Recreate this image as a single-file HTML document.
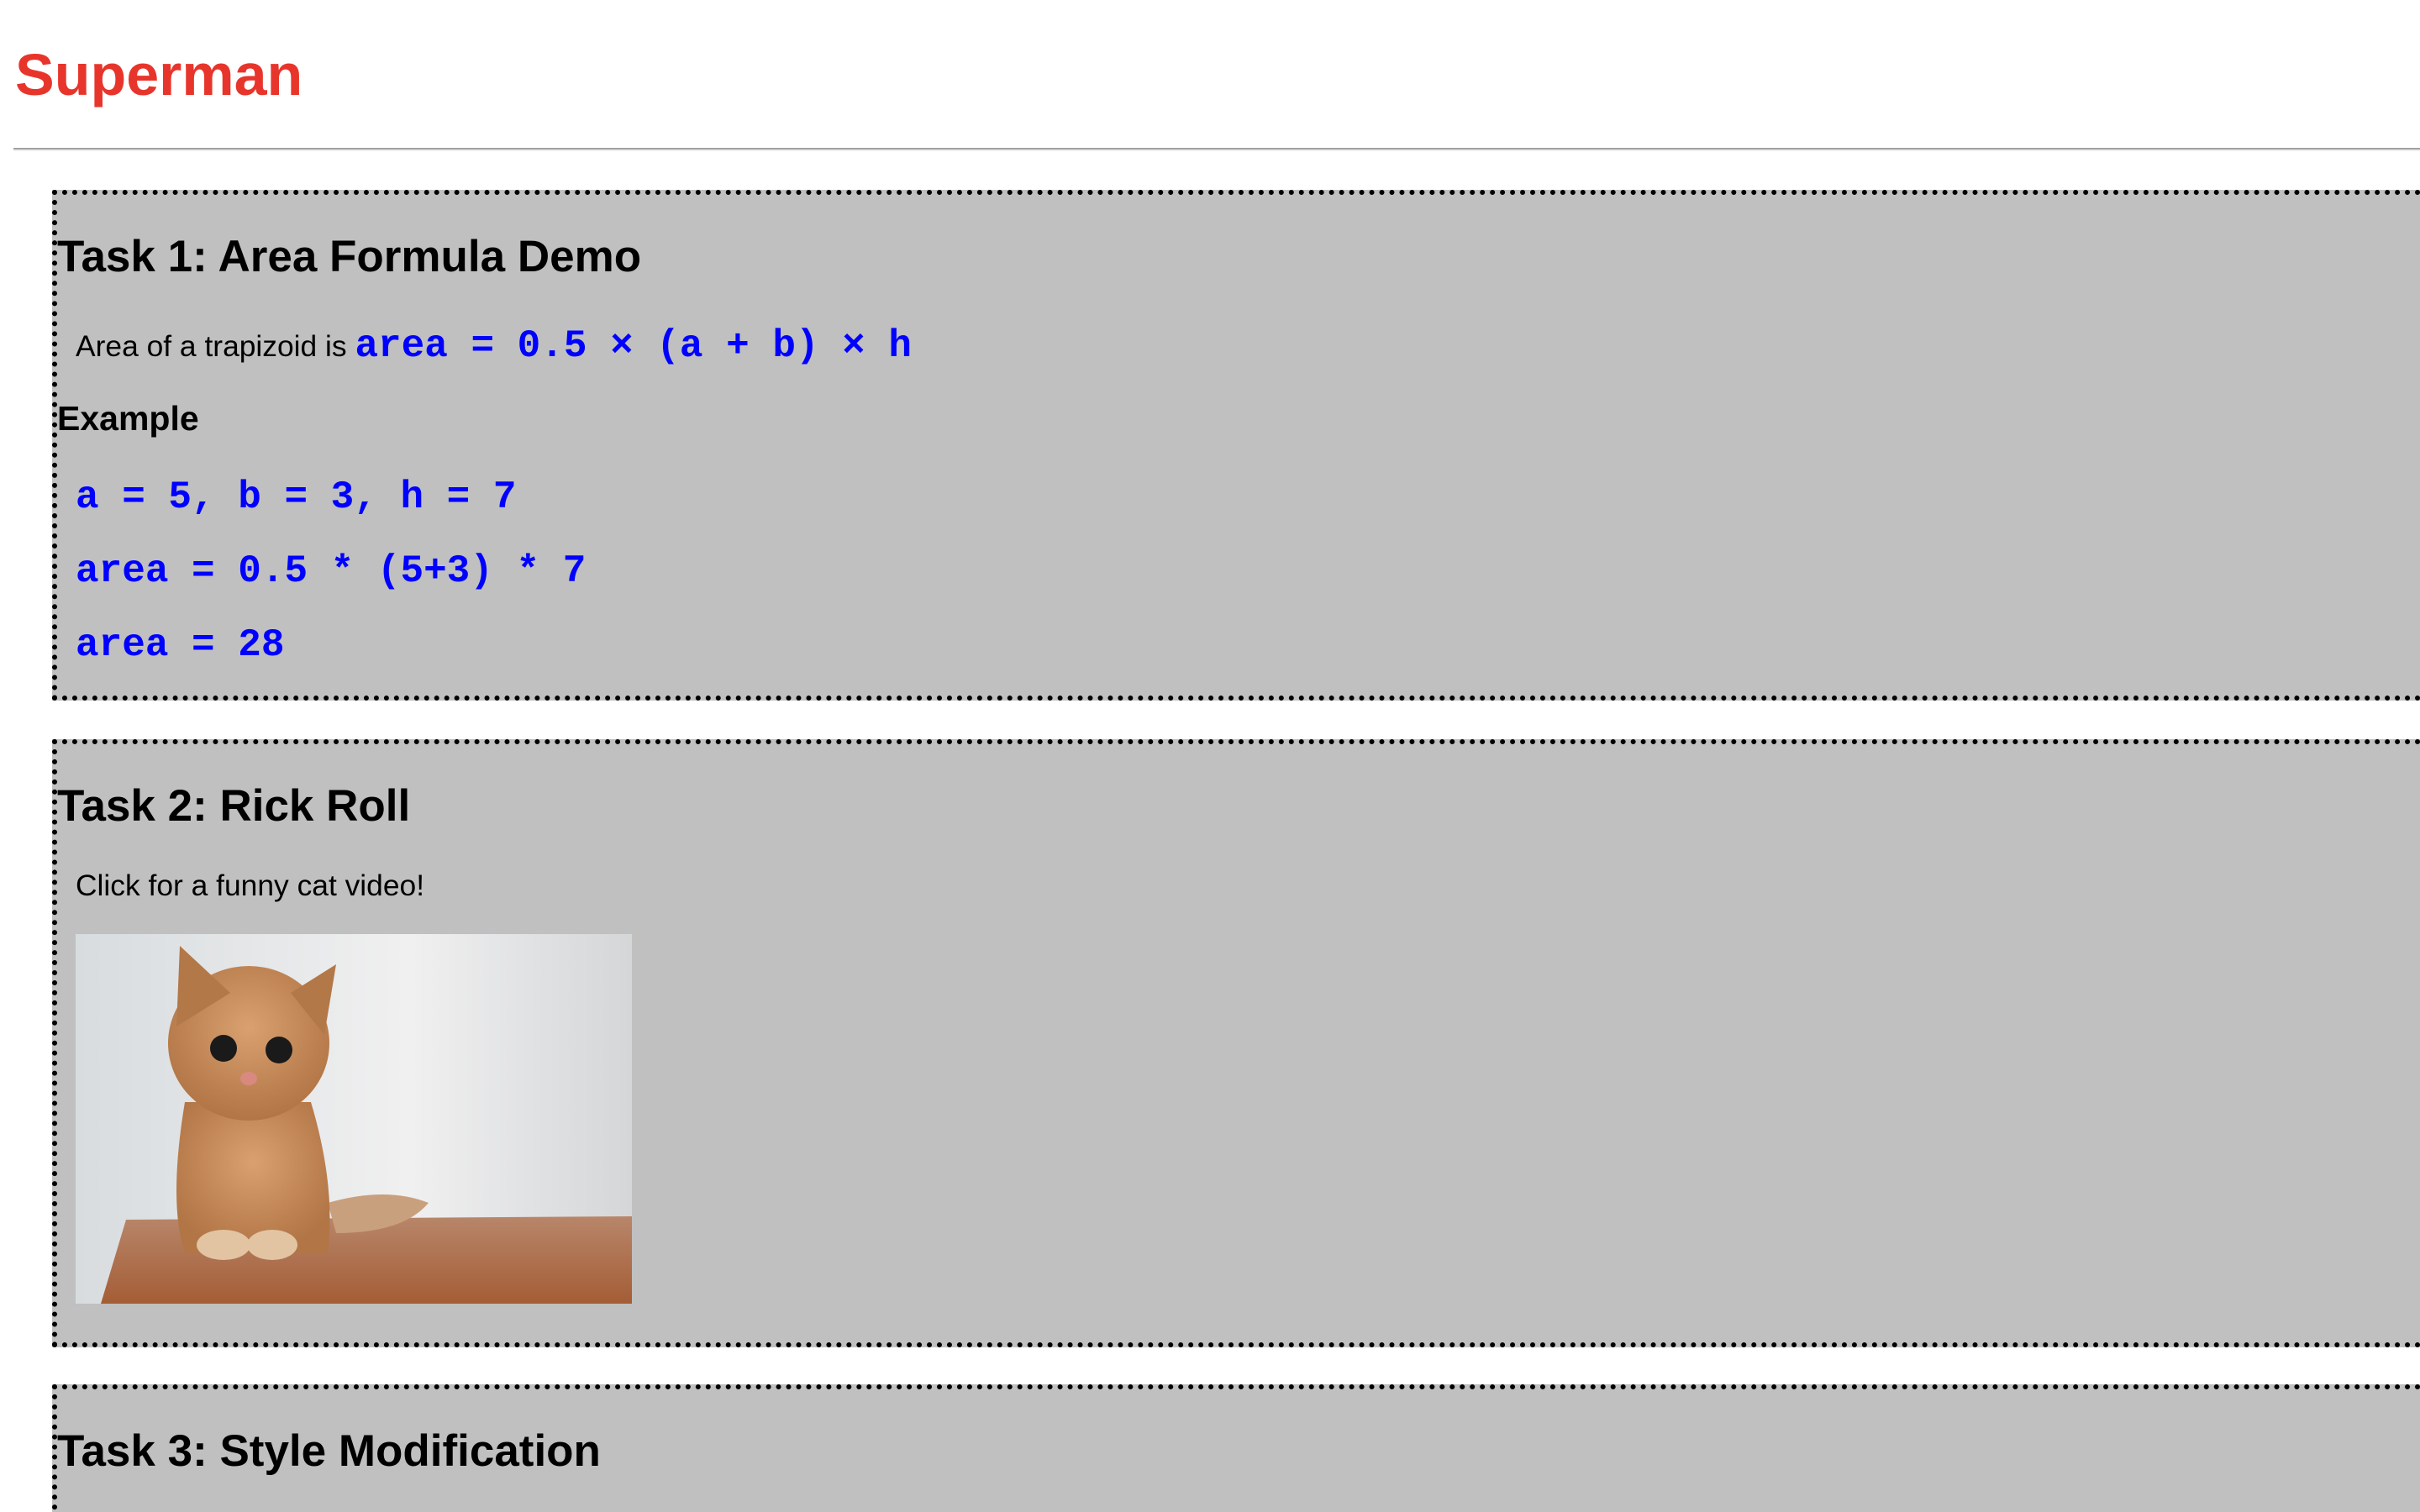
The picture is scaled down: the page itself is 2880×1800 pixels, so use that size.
<!DOCTYPE html>
<html><head><meta charset="utf-8"><style>
html,body{margin:0;padding:0;background:#fff;overflow:hidden;height:1800px}
#root{zoom:2;width:1440px;height:900px;position:relative;overflow:hidden;font-family:"Liberation Sans",Arial,sans-serif}
.a{position:absolute;white-space:nowrap}
h1.a{margin:0;color:#e8352b;font-size:35px;font-weight:bold;left:9px;top:26px;line-height:37px}
hr.a{margin:0;left:8px;width:1440px;top:88px;height:0;border:0;border-top:1px solid #a0a0a0;border-bottom:1px solid #eee}
.box{position:absolute;left:31px;width:1500px;background:#c0c0c0;border:3px dotted #000;box-sizing:border-box}
.h2{font-size:26.5px;font-weight:bold;left:34px;line-height:30px}
.p{font-size:17.7px;left:45px;line-height:22px;color:#000}
.c{font-family:"Liberation Mono","Courier New",monospace;font-weight:bold;color:#0000ff;font-size:23px}
</style></head><body><div id="root">
<h1 class="a">Superman</h1>
<hr class="a">
<div class="box" style="top:113px;height:304px"></div>
<div class="box" style="top:440px;height:362px"></div>
<div class="box" style="top:824px;height:200px"></div>

<div class="a h2" style="top:138px">Task 1: Area Formula Demo</div>
<div class="a p" style="top:193px;line-height:26px">Area of a trapizoid is <span class="c">area = 0.5 × (a + b) × h</span></div>
<div class="a" style="left:34px;top:237px;font-size:20.5px;font-weight:bold;line-height:24px">Example</div>
<div class="a c" style="left:45px;top:283px;line-height:26px">a = 5, b = 3, h = 7</div>
<div class="a c" style="left:45px;top:327px;line-height:26px">area = 0.5 * (5+3) * 7</div>
<div class="a c" style="left:45px;top:371px;line-height:26px">area = 28</div>

<div class="a h2" style="top:465px">Task 2: Rick Roll</div>
<div class="a p" style="top:516px">Click for a funny cat video!</div>
<svg class="a" style="left:45px;top:556px" width="331" height="220" viewBox="0 0 331 220" preserveAspectRatio="none">
<defs>
<linearGradient id="bg" x1="0" x2="1"><stop offset="0" stop-color="#d8dcdf"/><stop offset=".6" stop-color="#f0f0f0"/><stop offset="1" stop-color="#d4d6d8"/></linearGradient>
<linearGradient id="tb" x1="0" y1="0" x2="0" y2="1"><stop offset="0" stop-color="#b8866a"/><stop offset="1" stop-color="#a45d35"/></linearGradient>
<radialGradient id="cat" cx=".5" cy=".4" r=".6"><stop offset="0" stop-color="#d9a070"/><stop offset="1" stop-color="#b27545"/></radialGradient>
</defs>
<rect width="331" height="220" fill="url(#bg)"/>
<polygon points="30,170 331,168 331,220 15,220" fill="url(#tb)"/>
<path d="M150,160 Q185,150 210,160 Q195,178 155,178 Z" fill="#c9a07d"/>
<path d="M65,100 Q55,160 65,190 L150,190 Q155,150 140,100 Z" fill="url(#cat)"/>
<ellipse cx="103" cy="65" rx="48" ry="46" fill="url(#cat)"/>
<polygon points="60,55 62,7 92,35" fill="#b27848"/>
<polygon points="128,35 155,18 148,60" fill="#b27848"/>
<ellipse cx="88" cy="185" rx="16" ry="9" fill="#e2c4a3"/>
<ellipse cx="117" cy="185" rx="15" ry="9" fill="#e2c4a3"/>
<circle cx="88" cy="68" r="8" fill="#1a1a1a"/>
<circle cx="121" cy="69" r="8" fill="#1a1a1a"/>
<ellipse cx="103" cy="86" rx="5" ry="4" fill="#d98a80"/>
</svg>

<div class="a h2" style="top:849px">Task 3: Style Modification</div>
</div></body></html>
